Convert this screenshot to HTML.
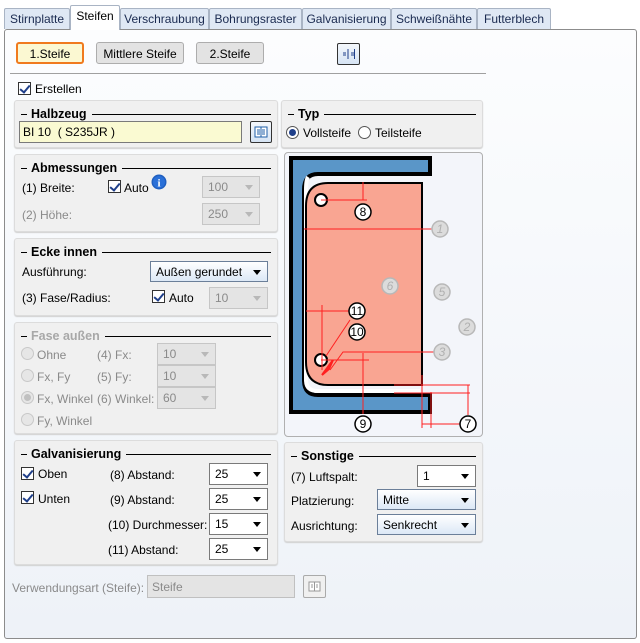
<!DOCTYPE html>
<html><head><meta charset="utf-8"><style>
*{box-sizing:border-box;margin:0;padding:0}
body{width:640px;height:643px;background:#fff;font-family:"Liberation Sans",sans-serif;font-size:12px;color:#000;position:relative;overflow:hidden}
.a{position:absolute;white-space:nowrap}
.tab{position:absolute;top:8px;height:21px;border:1px solid #a9b4c4;border-bottom:none;background:#dfe8f4;color:#1a2a50;padding:3px 0 0;text-align:center;border-radius:2px 2px 0 0}
.panel{position:absolute;left:4px;top:29px;width:633px;height:610px;border:1px solid #8c8c8c;border-radius:3px;background:linear-gradient(#fcfdfe,#eef2f8)}
.btn{position:absolute;height:22px;border:1px solid #adadad;background:#e3e3e3;border-radius:3px;text-align:center;padding-top:4px}
.grp{position:absolute;background:#f0f0f0;border:1px solid #dcdcdc;border-radius:3px;box-shadow:0 1px 1px #d0d0d0}
.gt{position:absolute;left:6px;top:5px;right:6px;display:flex;align-items:center;font-weight:bold;font-size:12.5px;height:16px}
.gt:before{content:"";width:6px;border-top:1px solid #000;margin-right:4px}
.gt:after{content:"";flex:1;border-top:1px solid #000;margin-left:5px}
.dd{position:absolute;height:22px;border:1px solid #7a7a7a;background:#fff;padding:3px 0 0 5px}
.dd:after{content:"";position:absolute;right:6px;top:8px;border-left:4px solid transparent;border-right:4px solid transparent;border-top:5px solid #000}
.dd.blue{background:linear-gradient(#fff,#dce8f6);border-color:#6b7f99}
.dd.dis{background:#e4e4e4;border-color:#c6c6c6;color:#8a8a8a}
.dd.dis:after{border-top-color:#b8b8b8}
.cb{position:absolute;width:13px;height:13px;border:1px solid #333;background:#fff}
.cb:after{content:"";position:absolute;left:3px;top:0px;width:4px;height:8px;border:solid #1f3f8a;border-width:0 2px 2px 0;transform:rotate(40deg)}
.rb{position:absolute;width:13px;height:13px;border:1px solid #555;border-radius:50%;background:#fff}
.rb.on:after{content:"";position:absolute;left:2px;top:2px;width:7px;height:7px;border-radius:50%;background:#1f3f8a}
.rb.dis{border-color:#c8c8c8;background:#e6e6e6}
.rb.dis.on:after{background:#c0c0c0}
.g{color:#8a8a8a}
.ib{position:absolute;width:23px;height:23px;border:1px solid #333;border-radius:2px;background:linear-gradient(#f4f8fc,#d6e4f4)}
</style></head><body>
<div class="panel"></div>
<div class="tab" style="left:4px;width:66px">Stirnplatte</div>
<div class="tab" style="left:70px;width:50px;top:5px;height:25px;background:#fff;color:#000;z-index:2">Steifen</div>
<div class="tab" style="left:120px;width:89px">Verschraubung</div>
<div class="tab" style="left:209px;width:93px">Bohrungsraster</div>
<div class="tab" style="left:302px;width:89px">Galvanisierung</div>
<div class="tab" style="left:391px;width:86px">Schweißnähte</div>
<div class="tab" style="left:477px;width:74px">Futterblech</div>

<div class="btn" style="left:16px;top:42px;width:68px;background:#fbf8d2;border:2px solid #f07a1e;padding-top:3px">1.Steife</div>
<div class="btn" style="left:96px;top:42px;width:88px">Mittlere Steife</div>
<div class="btn" style="left:196px;top:42px;width:68px">2.Steife</div>
<div class="ib" style="left:337px;top:43px;width:23px;height:22px"><svg width="21" height="20"><path d="M5 9h3M5 11h3M13 9h3M13 11h3M10 5v10M16.5 5v10" stroke="#1f3f8a"/></svg></div>
<div class="a" style="left:10px;top:73px;width:476px;border-top:1px solid #a0a0a0"></div>

<div class="cb" style="left:18px;top:82px"></div><div class="a" style="left:35px;top:82px">Erstellen</div>

<!-- Halbzeug -->
<div class="grp" style="left:14px;top:100px;width:264px;height:48px"><div class="gt">Halbzeug</div></div>
<div class="a" style="left:19px;top:121px;width:223px;height:22px;border:1px solid #7a7a7a;background:#fafad2;padding:3px 0 0 3px">BI 10 &nbsp;( S235JR )</div>
<div class="ib" style="left:250px;top:121px;width:22px;height:22px"><svg width="20" height="20"><rect x="4" y="5" width="12" height="10" fill="#fff" stroke="#1f5fa8"/><path d="M6 8h3M6 10h3M6 12h3M11 8h3M11 10h3M11 12h3M10 5v10" stroke="#1f5fa8"/></svg></div>

<!-- Typ -->
<div class="grp" style="left:281px;top:100px;width:202px;height:48px"><div class="gt">Typ</div></div>
<div class="rb on" style="left:286px;top:126px"></div><div class="a" style="left:303px;top:126px">Vollsteife</div>
<div class="rb" style="left:358px;top:126px"></div><div class="a" style="left:375px;top:126px">Teilsteife</div>

<!-- Abmessungen -->
<div class="grp" style="left:14px;top:154px;width:264px;height:78px"><div class="gt">Abmessungen</div></div>
<div class="a" style="left:22px;top:181px">(1) Breite:</div>
<div class="cb" style="left:108px;top:180px"></div><div class="a" style="left:124px;top:181px">Auto</div>
<svg class="a" style="left:151px;top:174px" width="16" height="16"><circle cx="8" cy="8" r="7.5" fill="#1f5fc0"/><circle cx="8" cy="8" r="6" fill="#2a70d8"/><text x="8" y="12.5" text-anchor="middle" fill="#fff" font-weight="bold" font-size="11" font-family="Liberation Serif">i</text></svg>
<div class="dd dis" style="left:202px;top:176px;width:58px">100</div>
<div class="a g" style="left:22px;top:208px">(2) Höhe:</div>
<div class="dd dis" style="left:202px;top:203px;width:58px">250</div>

<!-- Ecke innen -->
<div class="grp" style="left:14px;top:238px;width:264px;height:78px"><div class="gt">Ecke innen</div></div>
<div class="a" style="left:22px;top:265px">Ausführung:</div>
<div class="dd blue" style="left:150px;top:261px;width:118px;height:21px">Außen gerundet</div>
<div class="a" style="left:22px;top:291px">(3) Fase/Radius:</div>
<div class="cb" style="left:152px;top:290px"></div><div class="a" style="left:169px;top:291px">Auto</div>
<div class="dd dis" style="left:209px;top:287px;width:59px">10</div>

<!-- Fase aussen -->
<div class="grp" style="left:14px;top:322px;width:264px;height:112px"><div class="gt" style="color:#a8a8a8">Fase außen</div></div>
<div class="rb dis" style="left:21px;top:347px"></div><div class="a g" style="left:37px;top:348px">Ohne</div>
<div class="a g" style="left:97px;top:348px">(4) Fx:</div><div class="dd dis" style="left:157px;top:343px;width:59px">10</div>
<div class="rb dis" style="left:21px;top:369px"></div><div class="a g" style="left:37px;top:370px">Fx, Fy</div>
<div class="a g" style="left:97px;top:370px">(5) Fy:</div><div class="dd dis" style="left:157px;top:365px;width:59px">10</div>
<div class="rb dis on" style="left:21px;top:391px"></div><div class="a g" style="left:37px;top:392px">Fx, Winkel</div>
<div class="a g" style="left:97px;top:392px">(6) Winkel:</div><div class="dd dis" style="left:157px;top:387px;width:59px">60</div>
<div class="rb dis" style="left:21px;top:413px"></div><div class="a g" style="left:37px;top:414px">Fy, Winkel</div>

<!-- drawing -->
<div class="a" style="left:284px;top:152px;width:199px;height:285px;border:1px solid #b0b0b0;border-radius:4px;background:#f3f5fa"></div>
<svg class="a" style="left:0;top:0" width="640" height="643">
<style>.r{stroke:#ff2020;stroke-width:1;fill:none}</style>
<path d="M291,158 H430 V174 H318 Q304,174 304,190 V380 Q304,395 318,395 H430 V412 H291 Z" fill="#5a96c8" stroke="#000" stroke-width="4"/>
<path d="M308,177 Q306,180 306,190 V380 Q306,391 318,391 H420" fill="none" stroke="#fff" stroke-width="4"/>
<path d="M328,183 H422 V385 H328 Q306,385 306,362 V206 Q306,183 328,183 Z" fill="#f9a592" stroke="#000" stroke-width="2"/>
<circle cx="321" cy="200" r="6" fill="#fff" stroke="#000" stroke-width="2"/>
<circle cx="321" cy="360" r="6" fill="#fff" stroke="#000" stroke-width="2"/>
<path class="r" d="M321,200 H367 M363,182 V200 M304,229 H440 M306,311 H350 M322,305 V370 M321,360 H369 M363,353 V385 M363,385 V414 M394,385 H470 M394,393 H470 M422,375 V428 M431,392 V428 M422,424 H460 M468,385 V415 M436,352 H343 L330,370"/>
<path class="r" d="M350,320 L326,356"/>
<path d="M322,375 L333,360 L329,369 Z" fill="#ff2020" stroke="#ff2020" stroke-width="2"/>
<g font-family="Liberation Sans" font-size="12" text-anchor="middle">
<g fill="#fff" stroke="#000" stroke-width="1.5">
<circle cx="363" cy="212" r="8"/><circle cx="357" cy="311" r="8"/><circle cx="357" cy="332" r="8"/><circle cx="363" cy="424" r="8"/><circle cx="468" cy="424" r="8"/></g>
<text x="363" y="216">8</text><text x="357" y="315">11</text><text x="357" y="336">10</text><text x="363" y="428">9</text><text x="468" y="428">7</text>
<g fill="#dcdcdc" stroke="#b8b8b8" stroke-width="1.5">
<circle cx="440" cy="229" r="8"/><circle cx="390" cy="286" r="8"/><circle cx="442" cy="292" r="8"/><circle cx="467" cy="327" r="8"/><circle cx="442" cy="352" r="8"/></g>
<g fill="#b0b0b0" font-style="italic"><text x="440" y="233">1</text><text x="390" y="290">6</text><text x="442" y="296">5</text><text x="467" y="331">2</text><text x="442" y="356">3</text></g>
</g>
</svg>

<!-- Galvanisierung -->
<div class="grp" style="left:14px;top:440px;width:264px;height:125px"><div class="gt">Galvanisierung</div></div>
<div class="cb" style="left:21px;top:467px"></div><div class="a" style="left:38px;top:467px">Oben</div>
<div class="cb" style="left:21px;top:491px"></div><div class="a" style="left:38px;top:492px">Unten</div>
<div class="a" style="left:110px;top:468px">(8) Abstand:</div><div class="dd" style="left:209px;top:463px;width:59px">25</div>
<div class="a" style="left:110px;top:493px">(9) Abstand:</div><div class="dd" style="left:209px;top:488px;width:59px">25</div>
<div class="a" style="left:108px;top:518px">(10) Durchmesser:</div><div class="dd" style="left:209px;top:513px;width:59px">15</div>
<div class="a" style="left:108px;top:543px">(11) Abstand:</div><div class="dd" style="left:209px;top:538px;width:59px">25</div>

<!-- Sonstige -->
<div class="grp" style="left:284px;top:442px;width:199px;height:100px"><div class="gt">Sonstige</div></div>
<div class="a" style="left:291px;top:470px">(7) Luftspalt:</div><div class="dd" style="left:417px;top:465px;width:59px">1</div>
<div class="a" style="left:291px;top:494px">Platzierung:</div><div class="dd blue" style="left:377px;top:489px;width:99px;height:21px">Mitte</div>
<div class="a" style="left:291px;top:519px">Ausrichtung:</div><div class="dd blue" style="left:377px;top:514px;width:99px;height:21px">Senkrecht</div>

<div class="a g" style="left:12px;top:581px">Verwendungsart (Steife):</div>
<div class="a g" style="left:147px;top:575px;width:148px;height:23px;border:1px solid #c0c0c0;background:#e4e4e4;padding:4px 0 0 4px">Steife</div>
<div class="a" style="left:303px;top:575px;width:23px;height:23px;border:1px solid #aaa;background:#f0f0f0;border-radius:2px"><svg width="21" height="21"><rect x="5" y="6" width="11" height="9" fill="#fff" stroke="#999"/><path d="M10.5 6v9M7 9h2M7 11h2M12 9h2M12 11h2" stroke="#999"/></svg></div>
</body></html>
